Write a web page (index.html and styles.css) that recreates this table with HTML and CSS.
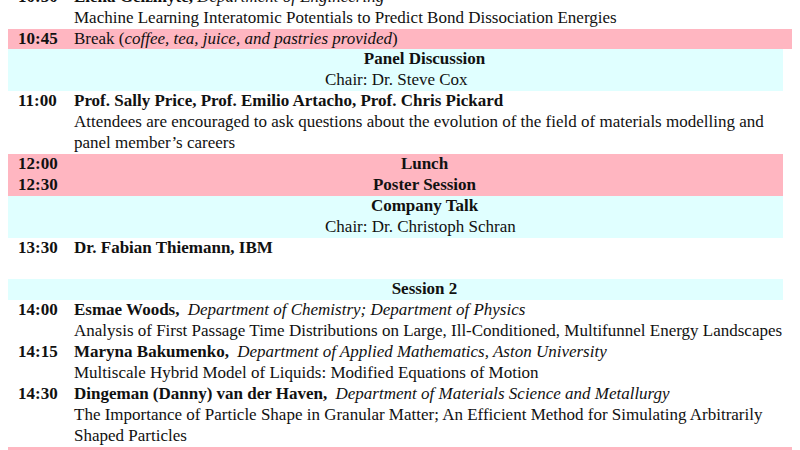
FILE: index.html
```html
<!DOCTYPE html>
<html lang="en">
<head>
<meta charset="utf-8">
<title>Programme</title>
<link rel="stylesheet" href="styles.css">
</head>
<body>
<div class="schedule">
  <div class="row">
    <div class="time">10:30</div>
    <div class="content">
      <div><b>Elena Gelžinytė,</b> <i>Department of Engineering</i></div>
      <div>Machine Learning Interatomic Potentials to Predict Bond Dissociation Energies</div>
    </div>
  </div>
  <div class="row brk wide">
    <div class="time">10:45</div>
    <div class="content">Break (<i>coffee, tea, juice, and pastries provided</i>)</div>
  </div>
  <div class="row sess">
    <div class="time"></div>
    <div class="head">
      <div class="title">Panel Discussion</div>
      <div class="chair">Chair: Dr. Steve Cox</div>
    </div>
  </div>
  <div class="row">
    <div class="time">11:00</div>
    <div class="content">
      <div><b>Prof. Sally Price, Prof. Emilio Artacho, Prof. Chris Pickard</b></div>
      <div>Attendees are encouraged to ask questions about the evolution of the field of materials modelling and<br>panel member’s careers</div>
    </div>
  </div>
  <div class="row brk">
    <div class="time">12:00</div>
    <div class="head"><div class="title">Lunch</div></div>
  </div>
  <div class="row brk">
    <div class="time">12:30</div>
    <div class="head"><div class="title">Poster Session</div></div>
  </div>
  <div class="row sess">
    <div class="time"></div>
    <div class="head">
      <div class="title">Company Talk</div>
      <div class="chair">Chair: Dr. Christoph Schran</div>
    </div>
  </div>
  <div class="row">
    <div class="time">13:30</div>
    <div class="content"><div><b>Dr. Fabian Thiemann, IBM</b></div></div>
  </div>
  <div class="row spacer"></div>
  <div class="row sess">
    <div class="time"></div>
    <div class="head"><div class="title">Session 2</div></div>
  </div>
  <div class="row">
    <div class="time">14:00</div>
    <div class="content">
      <div><b>Esmae Woods,</b> <i class="dept">Department of Chemistry; Department of Physics</i></div>
      <div>Analysis of First Passage Time Distributions on Large, Ill-Conditioned, Multifunnel Energy Landscapes</div>
    </div>
  </div>
  <div class="row">
    <div class="time">14:15</div>
    <div class="content">
      <div><b>Maryna Bakumenko,</b> <i class="dept">Department of Applied Mathematics, Aston University</i></div>
      <div>Multiscale Hybrid Model of Liquids: Modified Equations of Motion</div>
    </div>
  </div>
  <div class="row">
    <div class="time">14:30</div>
    <div class="content">
      <div><b>Dingeman (Danny) van der Haven,</b> <i class="dept">Department of Materials Science and Metallurgy</i></div>
      <div>The Importance of Particle Shape in Granular Matter; An Efficient Method for Simulating Arbitrarily<br>Shaped Particles</div>
    </div>
  </div>
  <div class="row brk wide">
    <div class="time">14:45</div>
    <div class="content">Break (<i>coffee, tea, juice, and pastries provided</i>)</div>
  </div>
</div>
</body>
</html>
```

FILE: styles.css
```css
html, body {
  margin: 0;
  padding: 0;
  background: #ffffff;
  overflow: hidden;
}
body {
  padding: 0 8px;
  font-family: "Liberation Serif", "Times New Roman", serif;
  font-size: 17px;
  line-height: 20.9px;
  color: #111;
}
.schedule {
  margin-top: -13.3px;
  width: 775px;
}
.row {
  display: grid;
  grid-template-columns: 58px 1fr;
  width: 775px;
}
.row.wide {
  width: 784px;
}
.time {
  padding-left: 10px;
  font-weight: bold;
}
.content {
  padding-left: 8px;
  white-space: nowrap;
}
.brk {
  background: #ffb6c1;
}
.sess {
  background: #e0ffff;
}
.head {
  text-align: center;
}
.title {
  font-weight: bold;
}
.chair {
  text-align: left;
  padding-left: 259px;
}
.dept {
  margin-left: 4px;
}
.spacer {
  height: 20.9px;
}
```
